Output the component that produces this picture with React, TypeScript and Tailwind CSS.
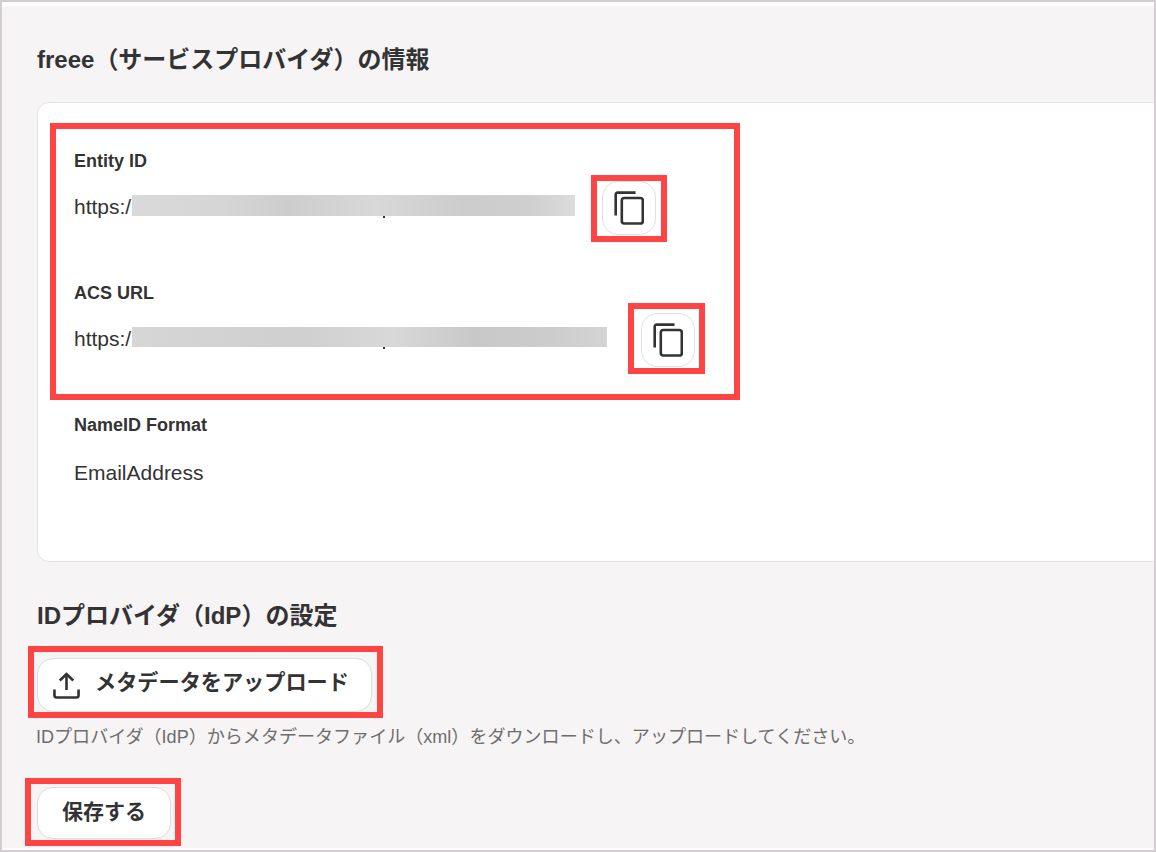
const fontStack = { fontFamily: '"Liberation Sans", "Noto Sans CJK JP", sans-serif' };

// red annotation frame drawn on the wrapper, does not take up layout space
const redFrame = 'outline-[6px] outline-[#ff4444]';

function CopyIcon() {
  return (
    <svg width="30" height="34" viewBox="0 0 30 34" fill="none" stroke="#333333" strokeWidth="2.6">
      <path d="M21.5 1.6H3.7a2 2 0 0 0-2 2V24.5" />
      <rect x="7.8" y="7" width="21" height="25.5" rx="2.5" />
    </svg>
  );
}

function UploadIcon() {
  return (
    <svg width="27" height="27" viewBox="0 0 30 30" fill="none" stroke="#333333" strokeWidth="2.9">
      <path d="M15 20V2.5" />
      <path d="M7.5 9.5L15 2.2l7.5 7.3" />
      <path d="M1.6 19.5v6.4a2.5 2.5 0 0 0 2.5 2.5h21.8a2.5 2.5 0 0 0 2.5-2.5v-6.4" />
    </svg>
  );
}

function CopyButton() {
  return (
    <button className="flex h-[54px] w-[54px] shrink-0 items-center justify-center rounded-2xl border border-[#e2e0e2] bg-white">
      <CopyIcon />
    </button>
  );
}

function UrlRow({ barClass, frameClass }: { barClass: string; frameClass: string }) {
  return (
    <div className="mt-2 flex h-[54px] items-center">
      <span className="mb-[2px] w-[58px] shrink-0 text-[21px] text-[#333333]">https:/</span>
      <div className={`${barClass} mb-[6px] flex shrink-0 items-end`}>
        {/* bit of the url showing under the blur */}
        <span className="mb-[-2px] ml-[251px] h-[2px] w-[2px] bg-[#333333]" />
      </div>
      <div className={`${frameClass} ${redFrame} shrink-0`}>
        <CopyButton />
      </div>
    </div>
  );
}

export default function App() {
  return (
    <div
      className="h-[852px] w-[1156px] overflow-hidden border-2 border-[#d1cdd1] bg-white"
      style={fontStack}
    >
      <div className="mt-1 h-[842px] overflow-hidden bg-[#f6f4f5] pl-[35px] pt-[38px]">
        <h2 className="text-[24px] leading-8 font-bold text-[#333333]">freee（サービスプロバイダ）の情報</h2>

        <div className="mt-[26px] h-[460px] w-[1200px] rounded-xl border border-[#e4e3e4] bg-white pl-[18px] pt-[26px]">
          <div className={`${redFrame} w-[678px] pb-[27px] pl-[18px] pt-5`}>
            <div className="text-[18px] leading-6 font-bold text-[#333333]">Entity ID</div>
            <UrlRow
              barClass="h-[21px] w-[443px] bg-[linear-gradient(90deg,#d9d9d9,#d6d6d6_20%,#cdcdcd_35%,#d8d8d8_55%,#cccccc_75%,#cfcfcf_90%,#dcdcdc)]"
              frameClass="mb-[-1px] ml-[22px] px-[5px] pb-px"
            />
            <div className="mt-[46px] text-[18px] leading-6 font-bold text-[#333333]">ACS URL</div>
            <UrlRow
              barClass="h-[20px] w-[475px] bg-[linear-gradient(90deg,#d6d6d6,#cfcfcf_35%,#d8d8d8_55%,#c8c8c8_72%,#cccccc_88%,#d4d4d4)]"
              frameClass="mb-[-1px] ml-[27px] mt-[-4px] pb-px pl-[7px] pr-1 pt-1"
            />
          </div>
          <div className="mt-[19px] pl-[18px]">
            <div className="text-[18px] leading-6 font-bold text-[#333333]">NameID Format</div>
            <div className="mt-[9px] flex h-[54px] items-center text-[21px] text-[#333333]">EmailAddress</div>
          </div>
        </div>

        <h2 className="mt-[38px] text-[24px] leading-8 font-bold text-[#333333]">IDプロバイダ（IdP）の設定</h2>

        <div className={`${redFrame} ml-[-3px] mt-5 w-[343px] pl-[3px] pt-[6px]`}>
          <button className="flex h-[54px] w-[335px] items-center rounded-2xl border border-[#dedcde] bg-white pl-[15px]">
            <UploadIcon />
            <span className="mb-[5px] ml-[15px] text-[21.17px] font-bold text-[#333333]">メタデータをアップロード</span>
          </button>
        </div>

        <p className="-ml-px mt-[13px] text-[18.06px] leading-6 text-[#6f6c6d]">
          IDプロバイダ（IdP）からメタデータファイル（xml）をダウンロードし、アップロードしてください。
        </p>

        <div className={`${redFrame} ml-[-6px] mt-[35px] w-[144px] pb-px pl-[6px] pt-[3px]`}>
          <button className="block h-[52px] w-[134px] rounded-2xl border border-[#dedcde] bg-white pb-[2px] text-center text-[21px] font-bold text-[#333333]">
            保存する
          </button>
        </div>
      </div>
    </div>
  );
}
